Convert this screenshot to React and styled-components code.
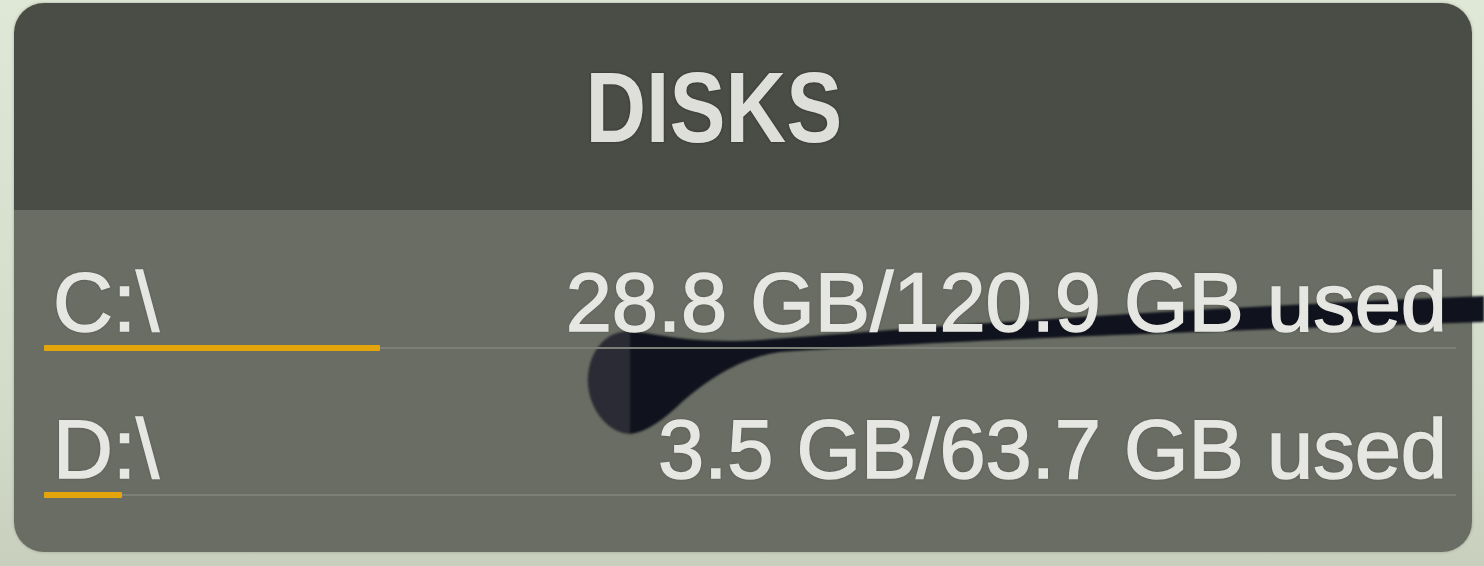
import React from "react";
import styled, { createGlobalStyle } from "styled-components";

const GlobalStyle = createGlobalStyle`
  html, body {
    margin: 0;
    padding: 0;
    background: #d6dfcd;
  }
  body {
    font-family: "Liberation Sans", Arial, sans-serif;
  }
`;

const Page = styled.div`
  position: relative;
  width: 1484px;
  height: 566px;
  padding: 3px 12px 0 14px;
  box-sizing: border-box;
  background: linear-gradient(180deg, #dfe7d6 0%, #d3dccb 70%, #c9cfbd 100%);
  overflow: hidden;
`;

const Widget = styled.div`
  width: 1458px;
  height: 549px;
  border-radius: 30px;
  overflow: hidden;
  display: flex;
  flex-direction: column;
  box-shadow: 0 0 3px rgba(60, 70, 55, 0.35);
`;

const Header = styled.div`
  height: 207px;
  flex: none;
  background: #4a4c46;
  display: flex;
  align-items: center;
  justify-content: center;
  padding-right: 58px;
  box-sizing: border-box;
`;

const Title = styled.h1`
  margin: 0;
  font-size: 100px;
  font-weight: 700;
  line-height: 1;
  color: #dededa;
  transform: scaleX(0.84);
  text-shadow: 0 0 3px rgba(0, 0, 0, 0.45);
`;

const Body = styled.div`
  flex: 1;
  background: #6a6d63;
  padding: 51px 16px 0 30px;
  display: flex;
  flex-direction: column;
  gap: 57px;
`;

const Row = styled.div`
  position: relative;
  z-index: 2;
  display: flex;
  flex-direction: column;
  gap: 1px;
`;

const Line = styled.div`
  display: flex;
  justify-content: space-between;
  padding: 0 9px;
  font-size: 83px;
  line-height: 83px;
  color: #e6e6e2;
  white-space: nowrap;
  -webkit-text-stroke: 1.5px #e6e6e2;
  text-shadow: 0 0 3px rgba(0, 0, 0, 0.4);
`;

const Track = styled.div`
  position: relative;
  height: 6px;

  &::before {
    content: "";
    position: absolute;
    left: 0;
    right: 0;
    top: 2px;
    height: 2px;
    background: #7c7f75;
  }
`;

const Fill = styled.div`
  position: relative;
  height: 6px;
  border-radius: 1px;
  background: #e3a40c;
`;

const Pin = styled.svg`
  position: absolute;
  left: 0;
  top: 0;
  z-index: 1;
  pointer-events: none;
  filter: blur(1.2px);
`;

const disks = [
  { name: "C:\\", used: 28.8, total: 120.9 },
  { name: "D:\\", used: 3.5, total: 63.7 },
];

export default function App() {
  return (
    <>
      <GlobalStyle />
      <Page>
        <Widget>
          <Header>
            <Title>DISKS</Title>
          </Header>
          <Body>
            {disks.map((d) => (
              <Row key={d.name}>
                <Line>
                  <span>{d.name}</span>
                  <span>
                    {d.used} GB/{d.total} GB used
                  </span>
                </Line>
                <Track>
                  <Fill style={{ width: `${(d.used / d.total) * 100}%` }} />
                </Track>
              </Row>
            ))}
          </Body>
        </Widget>
        <Pin width="1484" height="566" viewBox="0 0 1484 566">
          <path
            d="M630 331 C 660 334, 690 344, 760 340 C 900 330, 1100 312, 1484 296 L 1484 322 C 1100 334, 900 344, 780 352 C 740 358, 710 378, 682 402 C 665 418, 648 432, 630 434 Z"
            fill="#10131d"
          />
          <path
            d="M630 331 C 600 331, 586 360, 588 385 C 590 410, 608 433, 630 434 Z"
            fill="#2a2b35"
          />
        </Pin>
      </Page>
    </>
  );
}
